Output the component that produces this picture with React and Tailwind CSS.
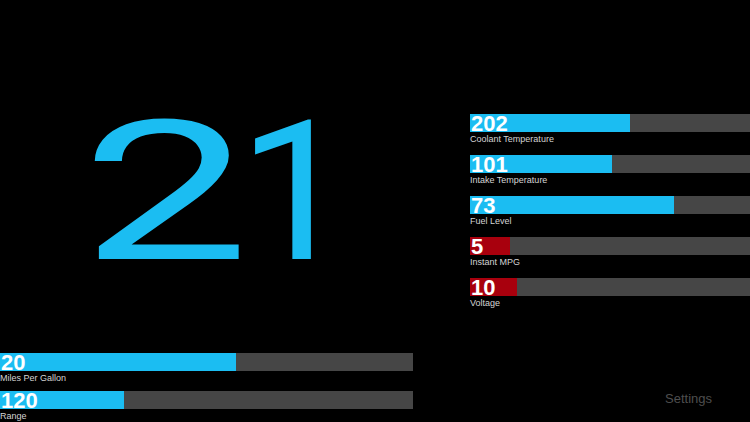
import React from 'react'

// -- Dash data ---------------------------------------------------------

const SIDE = [
  { value: '202', label: 'Coolant Temperature', fill: 160, color: 'bg-[#1bbdf2]' },
  { value: '101', label: 'Intake Temperature', fill: 142, color: 'bg-[#1bbdf2]' },
  { value: '73', label: 'Fuel Level', fill: 204, color: 'bg-[#1bbdf2]' },
  { value: '5', label: 'Instant MPG', fill: 40, color: 'bg-[#a8000d]' },
  { value: '10', label: 'Voltage', fill: 47, color: 'bg-[#a8000d]' },
]

const BOTTOM = [
  { value: '20', label: 'Miles Per Gallon', fill: 236, color: 'bg-[#1bbdf2]' },
  { value: '120', label: 'Range', fill: 124, color: 'bg-[#1bbdf2]' },
]

function Gauge({ value, label, fill, color }) {
  return (
    <div>
      <div className="relative h-[18px] bg-[#464646]">
        <div className={`h-full ${color}`} style={{ width: fill }} />
        <span className="absolute left-[1px] top-[2px] text-[22px] font-bold leading-[16px] text-white">
          {value}
        </span>
      </div>
      <div className="mt-[2px] text-[9px] leading-[11px] text-[#d4d4d4]">{label}</div>
    </div>
  )
}

export default function App() {
  return (
    <div
      className="w-[750px] h-[422px] bg-black flex overflow-hidden"
      style={{ fontFamily: '"Liberation Sans", Arial, sans-serif' }}
    >
      {/* left: big readout + trip gauges */}
      <div className="w-[413px] flex flex-col">
        <div
          className="flex-1 flex items-center pl-[81px] pt-[32px] text-[195px] leading-none text-[#1bbdf2]"
          style={{ fontFamily: 'Roboto, "Noto Sans", sans-serif' }}
        >
          <span className="inline-block w-[157px] origin-left scale-x-[1.54]">2</span>
          <span className="inline-block w-[80px] origin-left scale-x-[1.05]">1</span>
        </div>
        <div className="flex flex-col gap-[7px]">
          {BOTTOM.map(g => <Gauge key={g.label} {...g} />)}
        </div>
      </div>

      {/* right: engine gauges */}
      <div className="ml-[57px] flex-1 flex flex-col pt-[114px]">
        <div className="flex flex-col gap-[10px]">
          {SIDE.map(g => <Gauge key={g.label} {...g} />)}
        </div>
        <div className="mt-auto mb-[15px] mr-[38px] self-end text-[13px] leading-[16px] text-[#4e4e4e]">
          Settings
        </div>
      </div>
    </div>
  )
}
